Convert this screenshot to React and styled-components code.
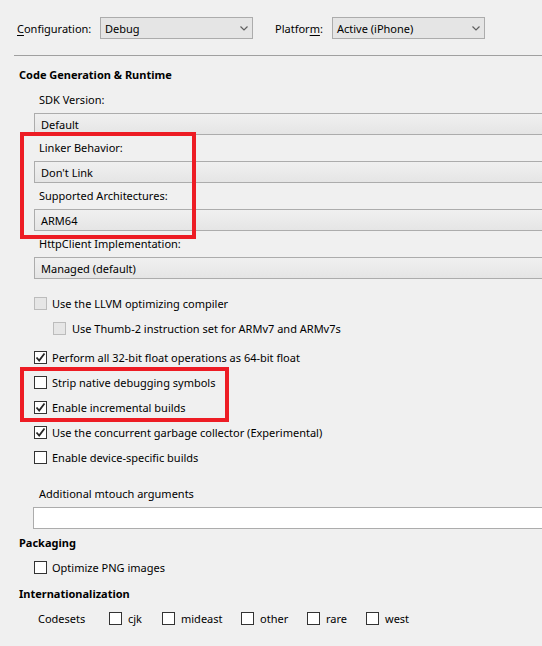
import React from 'react';
import styled, { createGlobalStyle } from 'styled-components';

const GlobalStyle = createGlobalStyle`
  html, body {
    margin: 0;
    padding: 0;
    background: #f0f0f0;
  }
  body {
    font-family: 'Noto Sans', Lato, sans-serif;
    font-size: 11px;
    color: #000;
  }
`;

const Page = styled.div`
  width: 542px;
  height: 646px;
  overflow: hidden;
  background: #f0f0f0;
  padding-top: 17px;
  box-sizing: border-box;
`;

const TopBar = styled.div`
  display: flex;
  align-items: center;
  height: 22px;
  padding-left: 17px;
`;

const TopLabel = styled.label`
  width: ${(p) => p.$width}px;
  flex-shrink: 0;

  u {
    text-decoration: underline;
    text-underline-offset: 2px;
  }
`;

const Combo = styled.div`
  width: 153px;
  height: 22px;
  box-sizing: border-box;
  border: 1px solid #acacac;
  background: #e5e5e5;
  display: flex;
  align-items: center;
  justify-content: space-between;
  padding: 0 4px 0 4px;
  margin-right: ${(p) => p.$gap || 0}px;
`;

const Separator = styled.hr`
  margin: 16px 0 0 14px;
  border: none;
  border-top: 1px solid #a0a0a0;
  height: 0;
`;

const SectionTitle = styled.div`
  font-weight: bold;
  height: 24px;
  line-height: 24px;
  padding-left: 19px;
  margin-top: ${(p) => p.$top || 0}px;
`;

const FieldLabel = styled.div`
  height: 26px;
  line-height: 26px;
  padding-left: 39px;
  margin-top: ${(p) => p.$top || 0}px;
`;

const Field = styled.div`
  height: 22px;
  box-sizing: border-box;
  margin-left: 34px;
  border: 1px solid #acacac;
  border-right: none;
  background: linear-gradient(#f0f0f0, #e5e5e5);
  padding-left: 6px;
  display: flex;
  align-items: center;
`;

const TextInput = styled.div`
  height: 22px;
  box-sizing: border-box;
  margin-left: 33px;
  border: 1px solid #acacac;
  border-right: none;
  background: #fff;
`;

const Highlight = styled.div`
  position: relative;

  &::after {
    content: '';
    position: absolute;
    left: 20px;
    top: -3px;
    width: ${(p) => p.$width}px;
    height: ${(p) => p.$height}px;
    box-sizing: border-box;
    border: 4px solid #ed1c24;
    pointer-events: none;
  }
`;

const CheckRow = styled.div`
  display: flex;
  align-items: center;
  height: 25px;
  padding-left: ${(p) => p.$indent || 34}px;
  margin-top: ${(p) => p.$top || 0}px;
`;

const Box = styled.span`
  width: 13px;
  height: 13px;
  box-sizing: border-box;
  border: 1px solid ${(p) => (p.$disabled ? '#bcbcbc' : '#333')};
  background: ${(p) => (p.$disabled ? '#e6e6e6' : '#fff')};
  display: flex;
  align-items: center;
  justify-content: center;
  flex-shrink: 0;
  margin-right: ${(p) => p.$space || 5}px;
`;

const Codesets = styled.div`
  display: flex;
  align-items: center;
  height: 25px;
  padding-left: 38px;
`;

const CodesetLabel = styled.span`
  width: 71px;
`;

const CodesetItem = styled.span`
  display: flex;
  align-items: center;
  width: ${(p) => p.$width}px;
`;

function Chevron() {
  return (
    <svg width="8" height="5" viewBox="0 0 8 5">
      <path d="M0.5 0.5 L4 4 L7.5 0.5" fill="none" stroke="#606060" strokeWidth="1.2" />
    </svg>
  );
}

function Check({ checked, disabled, space }) {
  return (
    <Box $disabled={disabled} $space={space}>
      {checked && (
        <svg width="11" height="11" viewBox="0 0 11 11">
          <path d="M1.5 5.5 L4.2 8.5 L9.5 1.5" fill="none" stroke="#262626" strokeWidth="1.8" />
        </svg>
      )}
    </Box>
  );
}

function Option({ children, checked, disabled, indent, top, space }) {
  return (
    <CheckRow $indent={indent} $top={top}>
      <Check checked={checked} disabled={disabled} space={space} />
      <span>{children}</span>
    </CheckRow>
  );
}

export default function App() {
  const codesets = [
    ['cjk', 53],
    ['mideast', 79],
    ['other', 66],
    ['rare', 59],
    ['west', 60],
  ];

  return (
    <Page>
      <GlobalStyle />
      <TopBar>
        <TopLabel $width={83}>
          <u>C</u>onfiguration:
        </TopLabel>
        <Combo $gap={22}>
          <span>Debug</span>
          <Chevron />
        </Combo>
        <TopLabel $width={57}>
          Platfor<u>m</u>:
        </TopLabel>
        <Combo>
          <span>Active (iPhone)</span>
          <Chevron />
        </Combo>
      </TopBar>
      <Separator />
      <SectionTitle $top={7}>Code Generation &amp; Runtime</SectionTitle>

      <FieldLabel>SDK Version:</FieldLabel>
      <Field>Default</Field>

      <Highlight $width={176} $height={107}>
        <FieldLabel>Linker Behavior:</FieldLabel>
        <Field>Don't Link</Field>
        <FieldLabel>Supported Architectures:</FieldLabel>
        <Field>ARM64</Field>
      </Highlight>

      <FieldLabel>HttpClient Implementation:</FieldLabel>
      <Field>Managed (default)</Field>

      <Option disabled top={12}>Use the LLVM optimizing compiler</Option>
      <Option disabled indent={53} space={6}>
        Use Thumb-2 instruction set for ARMv7 and ARMv7s
      </Option>
      <Option checked top={4}>Perform all 32-bit float operations as 64-bit float</Option>

      <Highlight $width={209} $height={55}>
        <Option>Strip native debugging symbols</Option>
        <Option checked>Enable incremental builds</Option>
      </Highlight>

      <Option checked>Use the concurrent garbage collector (Experimental)</Option>
      <Option>Enable device-specific builds</Option>

      <FieldLabel $top={11}>Additional mtouch arguments</FieldLabel>
      <TextInput />

      <SectionTitle $top={2}>Packaging</SectionTitle>
      <Option>Optimize PNG images</Option>
      <SectionTitle $top={2}>Internationalization</SectionTitle>
      <Codesets>
        <CodesetLabel>Codesets</CodesetLabel>
        {codesets.map(([name, w]) => (
          <CodesetItem key={name} $width={w}>
            <Check space={6} />
            <span>{name}</span>
          </CodesetItem>
        ))}
      </Codesets>
    </Page>
  );
}
